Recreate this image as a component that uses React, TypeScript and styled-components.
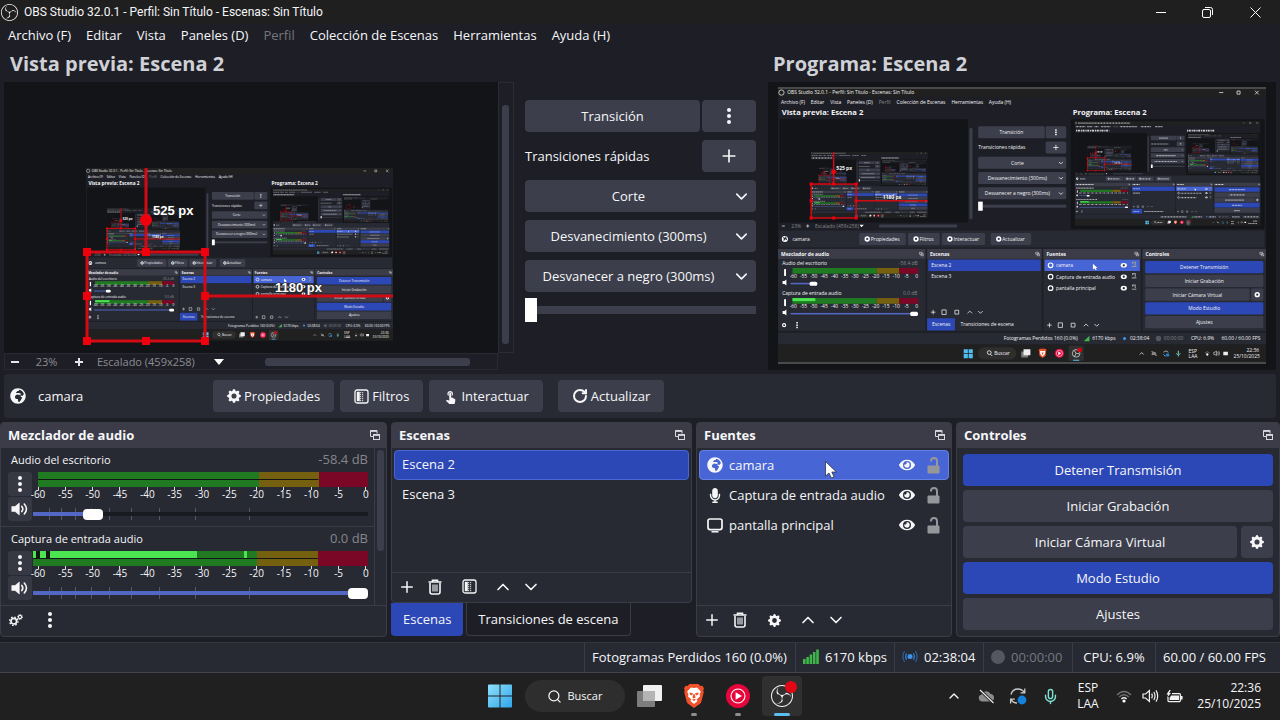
import React, { createContext, useContext } from 'react';
import styled, { createGlobalStyle, css } from 'styled-components';
import { BsGearFill } from 'react-icons/bs';
import { FaEye, FaGlobeAfrica, FaMicrophone } from 'react-icons/fa';
import { MdTouchApp } from 'react-icons/md';
import { SiObsstudio } from 'react-icons/si';
import { ChevronDown, ChevronUp, Mic, Plus, RotateCw, Search } from 'lucide-react';

const c = {
  window: '#1e1f26',
  panel: '#272a33',
  header: '#3b3c48',
  button: '#3c3e4b',
  border: '#3a3c48',
  canvas: '#131418',
  blue: '#2c48b6',
  blueEdge: '#4a66d4',
  source: '#4865d5',
  slider: '#5268c4',
  text: '#f6f6f8',
  muted: '#85868c',
  task: '#202020',
};

const Global = createGlobalStyle`
  *, *::before, *::after { box-sizing: border-box; }
  body {
    margin: 0;
    background: ${c.window};
    color: ${c.text};
    font: 13px/18px 'Open Sans', 'Noto Sans', sans-serif;
  }
  button, select, input { font: inherit; color: inherit; margin: 0; }
  ul { list-style: none; margin: 0; padding: 0; }
  svg { flex: none; display: block; }
`;

/* ---------- shared parts ---------- */

const Bare = styled.button`
  display: inline-flex;
  align-items: center;
  justify-content: center;
  padding: 0;
  border: 0;
  background: none;
`;

const IconButton = styled(Bare)<{ $w?: number }>`
  width: ${p => p.$w ?? 28}px;
  height: 28px;
`;

const Button = styled(Bare)<{ $primary?: boolean; $grow?: boolean; $w?: number }>`
  height: 32px;
  padding: 0 14px;
  gap: 3px;
  border-radius: 4px;
  white-space: nowrap;
  background: ${p => (p.$primary ? c.blue : c.button)};
  ${p => p.$grow && css`flex: 1;`}
  ${p => p.$w && css`width: ${p.$w}px; padding: 0;`}
`;

const Row = styled.div<{ $gap: number }>`
  display: flex;
  align-items: center;
  gap: ${p => p.$gap}px;
`;

/* ---------- icons ---------- */

const TrashIcon = () => (
  <svg width="14" height="16" viewBox="0 0 14 16" fill="none" stroke="currentColor">
    <path d="M0.5 3H13.5M4.5 2.5V1.2H9.5V2.5" strokeWidth="1.6" />
    <path d="M2 4V13Q2 15 4 15H10Q12 15 12 13V4" strokeWidth="1.6" />
    <path d="M5 5.5V12.5M7 5.5V12.5M9 5.5V12.5" strokeWidth="1.1" />
  </svg>
);

const FilterIcon = () => (
  <svg width="15" height="15" viewBox="0 0 15 15" fill="none">
    <rect x="1" y="1" width="13" height="13" rx="2" stroke="currentColor" strokeWidth="1.3" />
    <rect x="2.8" y="2.8" width="3" height="9.4" fill="currentColor" />
    <path d="M6.6 3V12.4M8.6 3V12.4" stroke="currentColor" strokeWidth="1.2" strokeDasharray="1.2 0.8" opacity="0.75" />
  </svg>
);

const KebabIcon = () => (
  <svg width="6" height="18" viewBox="0 0 6 18" fill="currentColor">
    <circle cx="3" cy="3" r="2" />
    <circle cx="3" cy="9" r="2" />
    <circle cx="3" cy="15" r="2" />
  </svg>
);

const SpeakerIcon = () => (
  <svg width="18" height="14" viewBox="0 0 18 14" fill="none" stroke="currentColor" strokeLinecap="round">
    <path d="M1 4.6H4L8.3 1V13L4 9.4H1Z" fill="currentColor" strokeWidth="0.6" />
    <path d="M10.8 4.4Q12.8 7 10.8 9.6" strokeWidth="1.6" />
    <path d="M13.3 2Q17.6 7 13.3 12" strokeWidth="1.6" />
  </svg>
);

const FloatIcon = () => (
  <svg width="10" height="10" viewBox="0 0 10 10" fill="none" stroke="#d8d9de">
    <path d="M3.5 6.5H0.5V0.5H7V3.5" />
    <path d="M0.5 1.2H7" strokeWidth="1.4" />
    <rect x="3.5" y="4.5" width="6" height="5" />
    <path d="M3.5 5.2H9.5" strokeWidth="1.4" />
  </svg>
);

const UnlockIcon = () => (
  <svg width="13" height="17" viewBox="0 0 13 17">
    <path d="M4 4.5V4A3 3 0 0 1 10 4V9" fill="none" stroke="#96979b" strokeWidth="2" />
    <rect x="0.5" y="8.5" width="12" height="8" rx="1" fill="#96979b" />
  </svg>
);

const MonitorIcon = () => (
  <svg width="16" height="15" viewBox="0 0 16 15" fill="none" stroke="currentColor" strokeWidth="1.7">
    <rect x="1" y="1" width="14" height="10.6" rx="2" />
    <path d="M4.5 13.8H11.5" strokeWidth="1.5" />
  </svg>
);

const GearsIcon = () => (
  <svg width="14" height="12" viewBox="0 0 14 12" fill="none" stroke="currentColor">
    <circle cx="4.8" cy="7.2" r="2.8" strokeWidth="1.7" />
    <circle cx="4.8" cy="7.2" r="4.2" strokeWidth="1.3" strokeDasharray="1.6 1.7" />
    <circle cx="11" cy="3" r="1.6" strokeWidth="1.1" />
    <circle cx="11" cy="3" r="2.5" strokeWidth="0.9" strokeDasharray="1 0.96" />
  </svg>
);

const SignalIcon = () => (
  <svg width="16" height="15" viewBox="0 0 16 15" fill="#3fb54a">
    <rect x="0" y="10" width="2.6" height="5" />
    <rect x="3.3" y="8" width="2.6" height="7" />
    <rect x="6.6" y="5.5" width="2.6" height="9.5" />
    <rect x="9.9" y="3" width="2.6" height="12" />
    <rect x="13.2" y="0.5" width="2.6" height="14.5" />
  </svg>
);

const LiveIcon = () => (
  <svg width="16" height="13" viewBox="0 0 16 13" fill="none" stroke="#3277c4" strokeWidth="1.2">
    <circle cx="8" cy="6.5" r="2.5" fill="#3f94ea" stroke="none" />
    <path d="M4.6 3.2Q2.6 6.5 4.6 9.8M11.4 3.2Q13.4 6.5 11.4 9.8" />
    <path d="M2.6 1Q-0.8 6.5 2.6 12M13.4 1Q16.8 6.5 13.4 12" opacity="0.7" />
  </svg>
);

const WindowsIcon = () => (
  <svg width="24" height="24" viewBox="0 0 25 24">
    <defs>
      <linearGradient id="win" x1="0" y1="0" x2="1" y2="1">
        <stop offset="0" stopColor="#8fe0fb" />
        <stop offset="1" stopColor="#2fa6ea" />
      </linearGradient>
    </defs>
    <path fill="url(#win)" d="M1 0H12V11.5H0V1Q0 0 1 0ZM13 0H24Q25 0 25 1V11.5H13ZM0 12.5H12V24H1Q0 24 0 23ZM13 12.5H25V23Q25 24 24 24H13Z" />
  </svg>
);

const TaskViewIcon = () => (
  <svg width="25" height="22" viewBox="0 0 25 22">
    <rect x="6" y="0" width="19" height="16" rx="1" fill="#f0f0f0" />
    <rect x="0" y="6" width="18" height="16" rx="1" fill="#7d7d7d" />
    <rect x="6" y="6" width="12" height="10" fill="#b4b4b4" />
  </svg>
);

const BraveIcon = () => (
  <svg width="20" height="24" viewBox="0 0 20 24">
    <path fill="#f0502a" d="M5.5 0H14.5L16.4 2L18.4 1.8L20 4.2L19.2 6.4L19.8 8L17.4 17.4Q17 19 15.6 20L10 24L4.4 20Q3 19 2.6 17.4L0.2 8L0.8 6.4L0 4.2L1.6 1.8L3.6 2Z" />
    <path fill="#fff" d="M10 4L13 3.6L16.8 7.6L15.6 10.6L16 12.4L12.6 15.4L13.6 17L10 20L6.4 17L7.4 15.4L4 12.4L4.4 10.6L3.2 7.6L7 3.6Z" />
    <path fill="#f0502a" d="M5.4 8.4L9 9.2L8 11.4L5.8 10.4ZM14.6 8.4L11 9.2L12 11.4L14.2 10.4ZM9.5 10H10.5L11.6 13.6L10 14.4L8.4 13.6ZM8 15.6L10 14.9L12 15.6L10 17Z" />
  </svg>
);

const MusicIcon = () => (
  <svg width="24" height="24" viewBox="0 0 24 24">
    <circle cx="12" cy="12" r="12" fill="#e6063c" />
    <circle cx="12" cy="12" r="7" fill="none" stroke="#fff" strokeWidth="1.1" />
    <path d="M9.6 8.2L16 12L9.6 15.8Z" fill="#fff" />
  </svg>
);

const CloudOffIcon = () => (
  <svg width="17" height="15" viewBox="0 0 17 15">
    <path d="M4 12.5A3.6 3.6 0 0 1 3.6 5.4A5 5 0 0 1 12.6 5A3.8 3.8 0 0 1 13 12.5Z" fill="#8d8d8d" />
    <path d="M2 1L15.5 14" stroke="#202020" strokeWidth="3" />
    <path d="M2 1L15.5 14" stroke="#eee" strokeWidth="1.1" />
  </svg>
);

const SyncIcon = () => (
  <svg width="18" height="18" viewBox="0 0 18 18" fill="none" stroke="#c9c9c9" strokeWidth="1.3">
    <path d="M2 7.5Q3.5 2 9 2Q13 2 15.5 5.6M15.8 1.6V5.8H11.6" />
    <path d="M8 16Q4 16 2 12.4M1.6 16.4V12.2H5.8" />
    <circle cx="13" cy="13" r="4.4" fill="#1583dc" stroke="none" />
  </svg>
);

const WifiIcon = () => (
  <svg width="16" height="13" viewBox="0 0 16 13" fill="none" strokeWidth="1.4">
    <path d="M1 5Q8 -2 15 5M3.2 7Q8 2.4 12.8 7" stroke="#707070" />
    <path d="M5.4 9Q8 6.6 10.6 9" stroke="#eee" />
    <circle cx="8" cy="11" r="1.6" fill="#fff" />
  </svg>
);

const SoundIcon = () => (
  <svg width="17" height="14" viewBox="0 0 17 14" fill="none" stroke="#f2f2f2" strokeWidth="1.2">
    <path d="M1 5H3.6L7.4 1.6V12.4L3.6 9H1Z" />
    <path d="M9.6 4.6Q11 7 9.6 9.4M11.8 3Q14.2 7 11.8 11M14 1.4Q17.4 7 14 12.6" />
  </svg>
);

const BatteryIcon = () => (
  <svg width="17" height="13" viewBox="0 0 17 13">
    <path d="M6 3.6H13.4Q14.4 3.6 14.4 4.6V10.6Q14.4 11.6 13.4 11.6H3Q2 11.6 2 10.6V7" fill="none" stroke="#f2f2f2" strokeWidth="1.2" />
    <path d="M5 5.4H13V10H3.6V8Z" fill="#f2f2f2" />
    <path d="M15 6H16.6V9.4H15Z" fill="#f2f2f2" />
    <path d="M3.4 0L0.4 4.6H2.2L1.2 7.6L5 3H3.2L4.8 0Z" fill="#f2f2f2" />
  </svg>
);

const Pointer = styled.svg`
  position: absolute;
  left: 125px;
  top: 10px;
  pointer-events: none;
`;

/* ---------- captured desktop shown inside the monitors ---------- */

const MENU: [string, boolean?][] = [
  ['Archivo (F)'], ['Editar'], ['Vista'], ['Paneles (D)'], ['Perfil', true],
  ['Colección de Escenas'], ['Herramientas'], ['Ayuda (H)'],
];
const MENU_X = [8, 86, 137, 181, 264, 311, 455, 553];
const DB = [-60, -55, -50, -45, -40, -35, -30, -25, -20, -15, -10, -5, 0];

/* Width in real pixels of the capture being drawn; small ones get strokes in place of words. */
const CaptureSize = createContext(1280);
const READABLE = 200;

type LabelProps = { x: number; y: number; bold?: boolean; big?: boolean; mid?: boolean; dim?: boolean; children: string | number };

const LabelText = styled.text<{ $bold?: boolean; $big?: boolean; $mid?: boolean; $dim?: boolean }>`
  fill: ${p => (p.$dim ? c.muted : '#f4f4f6')};
  font-size: ${p => (p.$big ? 20 : 13)}px;
  font-weight: ${p => (p.$bold ? 700 : 400)};
  text-anchor: ${p => (p.$mid ? 'middle' : 'start')};
`;

const Label = ({ x, y, bold, big, mid, dim, children }: LabelProps) => {
  const px = useContext(CaptureSize);
  if (px >= READABLE) {
    return <LabelText x={x} y={y} $bold={bold} $big={big} $mid={mid} $dim={dim}>{children}</LabelText>;
  }
  const size = big ? 20 : 13;
  const width = String(children).length * size * (bold ? 0.52 : 0.46);
  const height = size * 0.6;
  return (
    <path
      d={`M${mid ? x - width / 2 : x} ${y - height / 2}h${width}`}
      stroke={dim ? '#666' : '#e8e8ec'}
      strokeWidth={height}
      strokeDasharray={`${size * 0.4} ${size * 0.22} ${size * 0.7} ${size * 0.3}`}
      opacity={bold ? 0.9 : 0.7}
    />
  );
};

const CaptureMeter = ({ y, level, volume }: { y: number; level: number; volume: number }) => (
  <g>
    <rect x="38" y={y} width="221" height="15" fill="#207a22" />
    <rect x="259" y={y} width="59" height="15" fill="#74600f" />
    <rect x="318" y={y} width="50" height="15" fill="#7b0726" />
    <rect x="38" y={y} width={level} height="8" fill="#4be552" />
    {DB.map((d, i) => <Label key={d} mid x={40 + i * 27} y={y + 26}>{d}</Label>)}
    <rect x="16" y={y + 3} width="5" height="18" fill="#fff" />
    <path d={`M12 ${y + 34}H17L22 ${y + 30}V${y + 46}L17 ${y + 42}H12Z`} fill="#fff" />
    <rect x="33" y={y + 39} width={volume} height="4" fill={c.slider} />
    <rect x={33 + volume - 10} y={y + 36} width="20" height="11" rx="4" fill="#fff" />
  </g>
);

const Guides = ({ weight = 3 }: { weight?: number }) => (
  <g stroke="#d20a14" fill="#f0000c" strokeWidth={weight}>
    <rect x="83" y="170" width="118" height="89" fill="none" />
    <path d="M142 86V170M201 214H389" />
    <g stroke="none">
      {[[83, 170], [142, 170], [201, 170], [83, 214], [201, 214], [83, 259], [142, 259], [201, 259]].map(([x, y]) => (
        <rect key={`${x}-${y}`} x={x - 4} y={y - 4} width="8" height="8" />
      ))}
      <circle cx="142" cy="138" r="6" />
    </g>
  </g>
);

const GuideLabel = styled.text`
  fill: #fff;
  font: bold 13px 'Liberation Sans', sans-serif;
  paint-order: stroke;
  stroke: #222;
  stroke-width: 1px;
`;

const CaptureContents = ({ depth }: { depth: number }) => (
  <>
    <rect width="1280" height="720" fill={c.window} />
    <rect width="1280" height="24" fill={c.task} />
    <circle cx="9" cy="12" r="7" fill="none" stroke="#eee" strokeWidth="2" />
    <Label x={24} y={17}>OBS Studio 32.0.1 - Perfil: Sin Título - Escenas: Sin Título</Label>
    <path d="M1157 12H1168M1204 8H1212V16H1204ZM1251 7L1261 17M1261 7L1251 17" stroke="#eee" strokeWidth="2" fill="none" />
    {MENU.map(([t, dim], i) => <Label key={t} dim={dim} x={MENU_X[i]} y={41}>{t}</Label>)}
    <Label bold big x={10} y={71}>Vista previa: Escena 2</Label>
    <Label bold big x={773} y={71}>Programa: Escena 2</Label>
    <rect x="4" y="82" width="494" height="271" fill={c.canvas} />
    <rect x="768" y="82" width="508" height="288" fill={c.canvas} />
    {depth > 0 && <Capture x={86} y={168} width={307} depth={depth - 1} />}
    {depth > 0 && <Capture x={778} y={87} width={488} depth={depth - 1} />}
    <g transform="translate(4 82)"><Guides weight={4} /></g>
    <Label bold x={153} y={215}>525 px</Label>
    <Label bold x={275} y={292}>1180 px</Label>
    <rect x="502" y="105" width="8" height="239" rx="3" fill={c.button} />
    <rect x="265" y="358" width="205" height="8" rx="3" fill={c.button} />
    <path d="M10 362H18M74 362H82M78 358V366" stroke="#ddd" strokeWidth="2" />
    <Label dim x={35} y={367}>23%</Label>
    <Label dim x={97} y={367}>Escalado (459x258)</Label>
    <path d="M214 359H225L219 365Z" fill="#fff" />
    <rect x="525" y="100" width="175" height="32" rx="4" fill={c.button} />
    <Label mid x={612} y={121}>Transición</Label>
    <rect x="702" y="100" width="54" height="32" rx="4" fill={c.button} />
    <path d="M729 108V124" stroke="#fff" strokeWidth="4" strokeDasharray="4 2" />
    <Label x={525} y={161}>Transiciones rápidas</Label>
    <rect x="702" y="140" width="54" height="32" rx="4" fill={c.button} />
    <path d="M722 156H736M729 149V163" stroke="#fff" strokeWidth="2" />
    {['Corte', 'Desvanecimiento (300ms)', 'Desvanecer a negro (300ms)'].map((t, i) => (
      <g key={t}>
        <rect x="525" y={180 + i * 40} width="231" height="32" rx="4" fill={c.button} />
        <Label mid x={628} y={201 + i * 40}>{t}</Label>
        <path d={`M737 ${194 + i * 40}L742 ${199 + i * 40}L747 ${194 + i * 40}`} stroke="#fff" strokeWidth="2" fill="none" />
      </g>
    ))}
    <rect x="525" y="306" width="231" height="8" fill={c.button} />
    <rect x="525" y="298" width="12" height="24" fill="#fff" />
    <rect x="4" y="374" width="1272" height="44" fill={c.panel} />
    <circle cx="18" cy="396" r="8" fill="#fff" />
    <path d="M14 392L18 395L15 400M21 390L20 395L23 398" stroke={c.panel} strokeWidth="3" fill="none" />
    <Label x={38} y={401}>camara</Label>
    {([['Propiedades', 213, 122], ['Filtros', 341, 83], ['Interactuar', 430, 113], ['Actualizar', 558, 106]] as [string, number, number][]).map(([t, bx, w]) => (
      <g key={t}>
        <rect x={bx} y="380" width={w} height="32" rx="4" fill={c.button} />
        <circle cx={bx + 21} cy="396" r="5" fill="none" stroke="#fff" strokeWidth="4" />
        <Label x={bx + 30} y={401}>{t}</Label>
      </g>
    ))}
    {([['Mezclador de audio', 0, 387], ['Escenas', 391, 301], ['Fuentes', 696, 256], ['Controles', 956, 324]] as [string, number, number][]).map(([t, bx, w]) => (
      <g key={t}>
        <rect x={bx} y="422" width={w} height="215" fill={c.panel} />
        <rect x={bx} y="422" width={w} height="26" fill={c.header} />
        <Label bold x={bx + 8} y={440}>{t}</Label>
        <path d={`M${bx + w - 16} 431H${bx + w - 9}V436H${bx + w - 16}ZM${bx + w - 12} 435H${bx + w - 6}V440H${bx + w - 12}Z`} fill="none" stroke="#ddd" strokeWidth="1.5" />
      </g>
    ))}
    <Label x={11} y={465}>Audio del escritorio</Label>
    <Label dim x={317} y={465}>-58.4 dB</Label>
    <CaptureMeter y={472} level={0} volume={60} />
    <Label x={11} y={543}>Captura de entrada audio</Label>
    <Label dim x={328} y={543}>0.0 dB</Label>
    <CaptureMeter y={551} level={60} volume={324} />
    <circle cx="16" cy="622" r="4" fill="none" stroke="#fff" strokeWidth="3" />
    <path d="M50 614V630" stroke="#fff" strokeWidth="4" strokeDasharray="4 2" />
    <rect x="394" y="450" width="295" height="30" fill={c.blue} />
    <Label x={402} y={469}>Escena 2</Label>
    <Label x={402} y={499}>Escena 3</Label>
    <rect x="391" y="604" width="73" height="32" fill={c.blue} />
    <Label x={404} y={625}>Escenas</Label>
    <Label x={479} y={625}>Transiciones de escena</Label>
    <rect x="699" y="450" width="250" height="30" fill={c.source} />
    {['camara', 'Captura de entrada audio', 'pantalla principal'].map((t, i) => (
      <g key={t}>
        <circle cx="715" cy={465 + i * 30} r="6" fill="none" stroke="#fff" strokeWidth="3" />
        <Label x={729} y={470 + i * 30}>{t}</Label>
        <ellipse cx="907" cy={465 + i * 30} rx="8" ry="6" fill="#fff" />
        <circle cx="907" cy={465 + i * 30} r="3" fill={c.panel} />
        <path d={`M930 ${461 + i * 30}V${457 + i * 30}H937V${465 + i * 30}M928 ${468 + i * 30}H940`} stroke="#999" strokeWidth="3" fill="none" />
      </g>
    ))}
    <path d="M826 461V476L830 473L833 478L836 476L833 472H838Z" fill="#fff" />
    {[[391, 588], [696, 622]].map(([bx, by]) => (
      <path
        key={bx}
        d={`M${bx + 10} ${by}H${bx + 22}M${bx + 16} ${by - 6}V${by + 6}M${bx + 39} ${by - 6}H${bx + 50}V${by + 6}H${bx + 39}ZM${bx + 73} ${by - 5}H${bx + 83}V${by + 5}H${bx + 73}ZM${bx + 106} ${by + 3}L${bx + 112} ${by - 3}L${bx + 118} ${by + 3}M${bx + 134} ${by - 3}L${bx + 140} ${by + 3}L${bx + 146} ${by - 3}`}
        fill="none" stroke="#eee" strokeWidth="2"
      />
    ))}
    {['Detener Transmisión', 'Iniciar Grabación', 'Iniciar Cámara Virtual', 'Modo Estudio', 'Ajustes'].map((t, i) => (
      <g key={t}>
        <rect x="963" y={454 + i * 36} width={i === 2 ? 274 : 310} height="32" rx="4" fill={i % 3 === 0 ? c.blue : c.button} />
        <Label mid x={i === 2 ? 1100 : 1118} y={475 + i * 36}>{t}</Label>
      </g>
    ))}
    <rect x="1241" y="526" width="32" height="32" rx="4" fill={c.button} />
    <circle cx="1257" cy="542" r="5" fill="none" stroke="#fff" strokeWidth="4" />
    <rect y="642" width="1280" height="31" fill={c.panel} />
    <Label x={592} y={662}>Fotogramas Perdidos 160 (0.0%)</Label>
    <path d="M802 664L817 650V664Z" fill="#3fb54a" />
    <Label x={824} y={662}>6170 kbps</Label>
    <circle cx="909" cy="657" r="4" fill="#3f94ea" />
    <Label x={923} y={662}>02:38:04</Label>
    <circle cx="998" cy="657" r="7" fill="#555660" />
    <Label dim x={1012} y={662}>00:00:00</Label>
    <Label x={1083} y={662}>CPU: 6.9%</Label>
    <Label x={1163} y={662}>60.00 / 60.00 FPS</Label>
    <rect y="673" width="1280" height="47" fill={c.task} />
    <path d="M487 685H498V696H487ZM500 685H511V696H500ZM487 698H498V709H487ZM500 698H511V709H500Z" fill="#52bdf0" />
    <rect x="525" y="680" width="100" height="32" rx="16" fill="#2e2e2e" />
    <circle cx="554" cy="694" r="5" fill="none" stroke="#fff" strokeWidth="2" />
    <path d="M557 698L562 703" stroke="#fff" strokeWidth="2" />
    <Label x={567} y={701}>Buscar</Label>
    <path d="M638 691H656V707H638Z" fill="#7d7d7d" />
    <path d="M644 685H662V701H644Z" fill="#eee" />
    <path d="M684 686L688 684H700L704 686L702 702L694 708L686 702Z" fill="#f0502a" />
    <path d="M694 704L688 698L687 690H701L700 698Z" fill="#fff" />
    <path d="M694 700L691 694H697Z" fill="#f0502a" />
    <circle cx="738" cy="696" r="12" fill="#e6063c" />
    <path d="M735 691L743 696L735 701Z" fill="#fff" />
    <circle cx="738" cy="696" r="8" fill="none" stroke="#fff" strokeWidth="1.5" />
    <rect x="762" y="676" width="40" height="40" rx="4" fill="#303031" />
    <circle cx="782" cy="696" r="10" fill="none" stroke="#ddd" strokeWidth="2" />
    <path d="M782 696L777 689M782 696L790 697M782 696L778 704" stroke="#ddd" strokeWidth="2" />
    <circle cx="791" cy="687" r="6" fill="#e00010" />
    <path d="M774 714H790" stroke="#5cbdf0" strokeWidth="3" />
    <path d="M949 699L954 694L959 699M980 690L993 703" stroke="#eee" strokeWidth="2" fill="none" />
    <path d="M980 701Q978 695 984 692Q992 690 993 699Z" fill="#888" />
    <path d="M1011 693Q1018 686 1024 693M1011 699Q1014 703 1017 703" stroke="#ccc" strokeWidth="2" fill="none" />
    <circle cx="1022" cy="700" r="4.5" fill="#1583dc" />
    <path d="M1050 689V698M1045 696Q1050 704 1055 696M1050 700V704" stroke="#7fe0d4" strokeWidth="2.5" fill="none" />
    <path d="M1120 695Q1126 688 1132 695" stroke="#777" strokeWidth="2" fill="none" />
    <circle cx="1126" cy="699" r="3" fill="#fff" />
    <path d="M1143 693H1146L1150 690V702L1146 699H1143ZM1153 692Q1156 696 1153 700M1156 690Q1160 696 1156 702" stroke="#eee" strokeWidth="1.5" fill="none" />
    <path d="M1168 692H1180V701H1168Z" fill="#eee" />
    <Label x={1077} y={694}>ESP</Label>
    <Label x={1077} y={709}>LAA</Label>
    <Label x={1229} y={692}>22:36</Label>
    <Label x={1195} y={708}>25/10/2025</Label>
  </>
);

const Capture = ({ x, y, width, depth, top }: { x: number; y: number; width: number; depth: number; top?: boolean }) => {
  const parent = useContext(CaptureSize);
  return (
    <CaptureSize.Provider value={top ? width : (width * parent) / 1280}>
      <svg x={x} y={y} width={width} height={(width * 9) / 16} viewBox="0 0 1280 720">
        <CaptureContents depth={depth} />
      </svg>
    </CaptureSize.Provider>
  );
};

/* ---------- window frame ---------- */

const Shell = styled.div`
  display: flex;
  flex-direction: column;
  min-height: 100vh;
`;

const TitleBar = styled.header`
  display: flex;
  align-items: center;
  gap: 6px;
  height: 24px;
  padding-left: 1px;
  background: #1f1f20;
  font: 12px/18px Roboto, 'Open Sans', sans-serif;
  h1 { flex: 1; margin: 0; font: inherit; }
`;

const MenuBar = styled.nav`
  display: flex;
  gap: 15px;
  height: 24px;
  padding: 0 8px 2px;
`;

const MenuItem = styled(Bare)`
  &:disabled { color: #74757b; }
`;

/* ---------- studio area ---------- */

const Studio = styled.main`
  flex: 1;
  display: grid;
  grid-template-columns: minmax(0, 514fr) 254px minmax(0, 512fr);
  grid-template-rows: 34px minmax(288px, 1fr);
`;

const MonitorTitle = styled.h2<{ $program?: boolean }>`
  grid-column: ${p => (p.$program ? 3 : '1 / 3')};
  grid-row: 1;
  margin: 0;
  padding-left: ${p => (p.$program ? 5 : 10)}px;
  font-size: 20px;
  line-height: 32px;
  color: #d0d1d6;
`;

const Preview = styled.section`
  display: grid;
  grid-template: minmax(0, 1fr) 17px / minmax(0, 1fr) 16px;
  padding-left: 4px;
`;

const Canvas = styled.svg`
  width: 100%;
  height: 100%;
  background: ${c.canvas};
`;

const VScroll = styled.div`
  border: 1px solid #2a2b33;
  padding: 22px 4px 8px 3px;
  display: flex;
`;

const Thumb = styled.div<{ $w?: number; $h?: number }>`
  background: ${c.button};
  border-radius: 3px;
  width: ${p => (p.$w ? `${p.$w}px` : 'auto')};
  height: ${p => (p.$h ? `${p.$h}px` : 'auto')};
  flex: ${p => (p.$w || p.$h ? 'none' : 1)};
`;

const ZoomBar = styled.div`
  display: flex;
  align-items: center;
  border: 1px solid #292a31;
  font-size: 11px;
  line-height: 15px;
  color: #8c8d92;
`;

const ZoomButton = styled(Bare)`
  width: 19px;
  height: 15px;
  color: #e6e6ea;
`;

const ZoomValue = styled.output`
  width: 45px;
  text-align: center;
`;

const ScaleSelect = styled.select`
  appearance: none;
  width: 141px;
  height: 15px;
  padding: 0 0 0 9px;
  border: 0;
  background: none;
  margin-right: -15px;
`;

const Caret = styled.svg`
  pointer-events: none;
  margin-right: 41px;
`;

const Transitions = styled.section`
  display: flex;
  flex-direction: column;
  gap: 8px;
  padding: 18px 12px 0 11px;
`;

const Spread = styled.div`
  display: flex;
  align-items: center;
  justify-content: space-between;
`;

const QuickButton = styled(Button)`
  gap: 0;
  padding: 0 5px 0 0;
  span { flex: 1; text-align: center; }
`;

const TBar = styled.input`
  appearance: none;
  width: 100%;
  height: 24px;
  margin-top: -2px;
  background: linear-gradient(${c.button}, ${c.button}) center / 100% 8px no-repeat;
  &::-webkit-slider-thumb {
    appearance: none;
    width: 12px;
    height: 24px;
    background: #fff;
  }
`;

const Program = styled.section`
  padding-right: 4px;
  min-width: 0;
`;

const SourceBar = styled.section`
  display: flex;
  align-items: center;
  gap: 6px;
  height: 44px;
  margin: 4px;
  padding: 0 6px;
  border-radius: 4px;
  background: ${c.panel};
`;

const SourceName = styled.div`
  display: flex;
  align-items: center;
  gap: 12px;
  width: 197px;
`;

const LastButton = styled(Button)`
  margin-left: 9px;
`;

/* ---------- docks ---------- */

const Docks = styled.div`
  display: grid;
  grid-template-columns: 387fr 301fr 256fr 324fr;
  gap: 4px;
  height: 215px;
`;

const Column = styled.div`
  display: flex;
  flex-direction: column;
  min-width: 0;
`;

const Panel = styled.section`
  flex: 1;
  display: flex;
  flex-direction: column;
  min-width: 0;
  background: ${c.panel};
  border: 1px solid ${c.border};
  border-radius: 4px;
`;

const PanelHead = styled.header`
  display: flex;
  align-items: center;
  justify-content: space-between;
  height: 25px;
  padding: 0 6px 2px 7px;
  background: ${c.header};
  h3 { margin: 0; font-size: 13px; line-height: 18px; }
`;

const PanelFoot = styled.footer<{ $h: number }>`
  display: flex;
  align-items: center;
  height: ${p => p.$h}px;
  padding: 0 0 2px 1px;
  border-top: 1px solid ${c.border};
`;

const Gap = styled.span`
  width: 6px;
`;

const MixerBody = styled.div`
  flex: 1;
  display: flex;
`;

const Strips = styled.div`
  flex: 1;
  min-width: 0;
  border-right: 1px solid ${c.border};
`;

const MixerScroll = styled.div`
  width: 11px;
  padding: 2px;
`;

const Strip = styled.div`
  display: grid;
  grid-template-columns: 24px minmax(0, 1fr);
  column-gap: 1px;
  grid-template-rows: 24px 25px 28px;
  padding: 0 6px 0 7px;
  height: 78px;
  & + & { border-top: 1px solid ${c.border}; }
`;

const StripHead = styled.div`
  grid-column: 1 / 3;
  display: flex;
  justify-content: space-between;
  padding-left: 3px;
  line-height: 23px;
  label { font-size: 11px; }
  output { color: ${c.muted}; }
`;

const StripButton = styled(Bare)`
  height: 24px;
  border-radius: 3px;
  background: #363843;
`;

const Meter = styled.div`
  display: flex;
  flex-direction: column;
`;

const Bars = styled.div<{ $idle?: boolean }>`
  position: relative;
  height: 15px;
  flex: none;
  margin-left: ${p => (p.$idle ? 5 : 0)}px;
  background:
    linear-gradient(#141518, #141518) 0 7px / 85% 1px no-repeat,
    linear-gradient(90deg, #207a22 67%, #74600f 67%, #74600f 85%, #7b0726 85%);
`;

const Level = styled.span<{ $from: number; $to: number; $dark?: boolean }>`
  position: absolute;
  top: 0;
  left: ${p => p.$from}%;
  width: ${p => p.$to - p.$from}%;
  height: ${p => (p.$dark ? 8 : 7)}px;
  background: ${p => (p.$dark ? '#14160f' : '#4be552')};
`;

const Scale = styled.div`
  display: flex;
  justify-content: space-between;
  padding: 0 2px 0 5px;
  font-size: 10px;
  line-height: 10px;
  span {
    width: 0;
    display: flex;
    flex-direction: column;
    align-items: center;
    &::before { content: ''; width: 1px; height: 3px; margin-bottom: -1px; flex: none; background: #ddd; }
  }
`;

const Fader = styled.div`
  position: relative;
  display: flex;
  height: 24px;
  padding-top: 5px;
`;

const Tick = styled.i<{ $at: number }>`
  position: absolute;
  left: ${p => p.$at}%;
  top: 11px;
  width: 1px;
  height: 12px;
  background: #555763;
`;

const Volume = styled.input<{ $fill: number }>`
  appearance: none;
  position: relative;
  width: 100%;
  flex: none;
  height: 24px;
  background: linear-gradient(90deg, ${c.slider} ${p => p.$fill}%, #1a1b20 ${p => p.$fill}%) center / 100% 4px no-repeat;
  &::-webkit-slider-thumb {
    appearance: none;
    width: 20px;
    height: 11px;
    border-radius: 4px;
    background: #fff;
  }
`;

const List = styled.ul`
  flex: 1;
  padding: 2px;
`;

const SceneButton = styled(Bare)<{ $on?: boolean }>`
  width: 100%;
  height: 30px;
  justify-content: flex-start;
  padding: 0 7px 2px;
  border-radius: 4px;
  border: 1px solid ${p => (p.$on ? c.blueEdge : 'transparent')};
  background: ${p => (p.$on ? c.blue : 'none')};
`;

const SourceItem = styled.li<{ $on?: boolean }>`
  position: relative;
  display: flex;
  align-items: center;
  height: 30px;
  padding: 0 5px 0 7px;
  gap: 6px;
  border-radius: 4px;
  border: 1px solid ${p => (p.$on ? '#6480e6' : 'transparent')};
  background: ${p => (p.$on ? c.source : 'none')};
  > span { flex: 1; white-space: nowrap; }
  > svg { width: 16px; }
  > ${Pointer} { width: 12px; }
`;

const Toggle = styled(Bare)`
  width: 20px;
  height: 20px;
`;

const Tabs = styled.div`
  display: flex;
  gap: 3px;
  height: 34px;
`;

const Tab = styled(Bare)<{ $on?: boolean }>`
  height: 33px;
  padding: 0 11px;
  border-radius: 0 0 4px 4px;
  border: 1px solid ${p => (p.$on ? c.blue : c.border)};
  border-top: 0;
  background: ${p => (p.$on ? c.blue : 'none')};
`;

const Controls = styled.div`
  display: flex;
  flex-direction: column;
  gap: 4px;
  padding: 6px;
`;

/* ---------- status bar and taskbar ---------- */

const Status = styled.footer`
  display: flex;
  justify-content: flex-end;
  height: 31px;
  margin-top: 5px;
  background: ${c.panel};
  border-top: 1px solid #343640;
  border-bottom: 1px solid #43444c;
`;

const Cell = styled.div<{ $w: number; $dim?: boolean; $center?: boolean }>`
  display: flex;
  align-items: center;
  justify-content: ${p => (p.$center ? 'center' : 'flex-start')};
  gap: 6px;
  width: ${p => p.$w}px;
  padding: 0 0 2px ${p => (p.$center ? 0 : 7)}px;
  border-left: 1px solid ${c.border};
  white-space: nowrap;
  color: ${p => (p.$dim ? '#777882' : c.text)};
`;

const RecordDot = styled.span`
  width: 14px;
  height: 14px;
  border-radius: 50%;
  background: #555660;
`;

const Taskbar = styled.footer`
  display: grid;
  grid-template-columns: 1fr auto 1fr;
  align-items: center;
  height: 47px;
  padding-bottom: 1px;
  background: ${c.task};
`;

const Apps = styled.div`
  grid-column: 2;
  display: flex;
  align-items: center;
  gap: 4px;
  padding-left: 1px;
`;

const SearchButton = styled(Bare)`
  width: 100px;
  height: 32px;
  margin: 0 1px;
  gap: 6px;
  border-radius: 16px;
  background: #2e2e2e;
  font-size: 11px;
`;

const AppButton = styled(Bare)<{ $active?: boolean; $running?: boolean }>`
  position: relative;
  width: 40px;
  height: 40px;
  border-radius: 4px;
  background: ${p => (p.$active ? '#303031' : 'none')};
  &::after {
    content: '';
    display: ${p => (p.$active || p.$running ? 'block' : 'none')};
    position: absolute;
    bottom: 0;
    width: ${p => (p.$active ? 16 : 6)}px;
    height: 3px;
    border-radius: 2px;
    background: ${p => (p.$active ? '#5cbdf0' : '#8e8e8e')};
  }
`;

const Badge = styled.span`
  position: absolute;
  top: 5px;
  right: 5px;
  width: 12px;
  height: 12px;
  border-radius: 50%;
  background: #e30613;
`;

const Tray = styled.div`
  display: flex;
  align-items: center;
  justify-content: flex-end;
  padding-right: 19px;
  font-size: 12px;
  line-height: 16px;
`;

const TrayButton = styled(Bare)<{ $w: number }>`
  width: ${p => p.$w}px;
  height: 40px;
`;

const Clock = styled.time`
  width: 75px;
  text-align: right;
`;

/* ---------- composition ---------- */

const PanelTitle = ({ children }: { children: string }) => (
  <PanelHead>
    <h3>{children}</h3>
    <Bare aria-label={`Desacoplar ${children}`}><FloatIcon /></Bare>
  </PanelHead>
);

const TICKS = [4.8, 8.4, 12.6, 17.4, 22.8, 29.4, 37.7, 48.5, 64.6];

const Channel = ({ id, name, db, value, idle, children }: {
  id: string; name: string; db: string; value: number; idle?: boolean; children?: React.ReactNode;
}) => (
  <Strip>
    <StripHead>
      <label htmlFor={id}>{name}</label>
      <output htmlFor={id}>{db}</output>
    </StripHead>
    <StripButton aria-label="Opciones de audio"><KebabIcon /></StripButton>
    <Meter>
      <Bars $idle={idle}>{children}</Bars>
      <Scale>{DB.map(d => <span key={d}>{d}</span>)}</Scale>
    </Meter>
    <StripButton aria-label="Silenciar"><SpeakerIcon /></StripButton>
    <Fader>
      {TICKS.map(t => <Tick key={t} $at={t} />)}
      <Volume id={id} type="range" min={0} max={100} defaultValue={value} $fill={value} />
    </Fader>
  </Strip>
);

const ListTools = ({ height, middle, middleLabel }: { height: number; middle: React.ReactNode; middleLabel: string }) => (
  <PanelFoot $h={height}>
    <IconButton aria-label="Añadir"><Plus size={18} /></IconButton>
    <IconButton aria-label="Eliminar"><TrashIcon /></IconButton>
    <Gap />
    <IconButton aria-label={middleLabel}>{middle}</IconButton>
    <Gap />
    <IconButton aria-label="Subir"><ChevronUp size={20} /></IconButton>
    <IconButton aria-label="Bajar"><ChevronDown size={20} /></IconButton>
  </PanelFoot>
);

const SOURCES = [
  { name: 'camara', icon: <FaGlobeAfrica size={16} />, on: true },
  { name: 'Captura de entrada audio', icon: <FaMicrophone size={15} /> },
  { name: 'pantalla principal', icon: <MonitorIcon /> },
];

export default function App() {
  return (
    <Shell>
      <Global />
      <TitleBar>
        <SiObsstudio size={17} />
        <h1>OBS Studio 32.0.1 - Perfil: Sin Título - Escenas: Sin Título</h1>
        <IconButton $w={46} aria-label="Minimizar">
          <svg width="10" height="10" stroke="#fff"><path d="M0 5.5H10" /></svg>
        </IconButton>
        <IconButton $w={34} aria-label="Restaurar">
          <svg width="11" height="11" fill="none" stroke="#fff">
            <rect x="0.5" y="2.5" width="8" height="8" rx="1.5" />
            <path d="M3 0.5H8.5Q10.5 0.5 10.5 2.5V8" />
          </svg>
        </IconButton>
        <IconButton $w={50} aria-label="Cerrar">
          <svg width="11" height="11" stroke="#fff"><path d="M0.5 0.5L10.5 10.5M10.5 0.5L0.5 10.5" /></svg>
        </IconButton>
      </TitleBar>
      <MenuBar>
        {MENU.map(([t, off]) => <MenuItem key={t} disabled={off}>{t}</MenuItem>)}
      </MenuBar>

      <Studio>
        <MonitorTitle>Vista previa: Escena 2</MonitorTitle>
        <MonitorTitle $program>Programa: Escena 2</MonitorTitle>
        <Preview>
          <Canvas viewBox="0 0 494 271" role="img" aria-label="Vista previa">
            <Capture top x={82} y={86} width={307} depth={2} />
            <Guides />
            <GuideLabel x="149" y="133">525 px</GuideLabel>
            <GuideLabel x="271" y="210">1180 px</GuideLabel>
          </Canvas>
          <VScroll><Thumb /></VScroll>
          <ZoomBar>
            <ZoomButton aria-label="Reducir">
              <svg width="8" height="8" stroke="currentColor" strokeWidth="2"><path d="M0 4H8" /></svg>
            </ZoomButton>
            <ZoomValue>23%</ZoomValue>
            <ZoomButton aria-label="Ampliar">
              <svg width="8" height="8" stroke="currentColor" strokeWidth="2"><path d="M0 4H8M4 0V8" /></svg>
            </ZoomButton>
            <ScaleSelect aria-label="Escala de la vista previa">
              <option>Escalado (459x258)</option>
            </ScaleSelect>
            <Caret width="10" height="6"><path d="M0 0H10L5 6Z" fill="#fff" /></Caret>
            <Thumb $w={205} $h={8} />
          </ZoomBar>
        </Preview>

        <Transitions>
          <Row $gap={2}>
            <Button $grow>Transición</Button>
            <Button $w={54} aria-label="Opciones de transición"><KebabIcon /></Button>
          </Row>
          <Spread>
            <span>Transiciones rápidas</span>
            <Button $w={54} aria-label="Añadir transición rápida"><Plus size={20} /></Button>
          </Spread>
          {['Corte', 'Desvanecimiento (300ms)', 'Desvanecer a negro (300ms)'].map(t => (
            <QuickButton key={t}><span>{t}</span><ChevronDown size={19} /></QuickButton>
          ))}
          <TBar type="range" aria-label="Barra de transición" min={0} max={100} defaultValue={0} />
        </Transitions>

        <Program>
          <Canvas viewBox="0 0 508 288" role="img" aria-label="Programa">
            <Capture top x={10} y={6} width={488} depth={3} />
            <path d="M10 6H498M10 281H498" stroke="#4a4a4d" strokeWidth="2" />
          </Canvas>
        </Program>
      </Studio>

      <SourceBar>
        <SourceName><FaGlobeAfrica size={16} />camara</SourceName>
        <Button><BsGearFill size={14} />Propiedades</Button>
        <Button><FilterIcon />Filtros</Button>
        <Button><MdTouchApp size={15} />Interactuar</Button>
        <LastButton><RotateCw size={16} strokeWidth={3} />Actualizar</LastButton>
      </SourceBar>

      <Docks>
        <Panel>
          <PanelTitle>Mezclador de audio</PanelTitle>
          <MixerBody>
            <Strips>
              <Channel id="desk" name="Audio del escritorio" db="-58.4 dB" value={16} idle />
              <Channel id="input" name="Captura de entrada audio" db="0.0 dB" value={100}>
                <Level $from={0} $to={49} />
                <Level $from={1} $to={2} $dark />
                <Level $from={4} $to={5} $dark />
                <Level $from={63} $to={64} />
              </Channel>
            </Strips>
            <MixerScroll><Thumb $h={101} /></MixerScroll>
          </MixerBody>
          <PanelFoot $h={31}>
            <IconButton aria-label="Propiedades avanzadas de audio"><GearsIcon /></IconButton>
            <Gap />
            <IconButton aria-label="Menú del mezclador"><KebabIcon /></IconButton>
          </PanelFoot>
        </Panel>

        <Column>
          <Panel>
            <PanelTitle>Escenas</PanelTitle>
            <List>
              <li><SceneButton $on>Escena 2</SceneButton></li>
              <li><SceneButton>Escena 3</SceneButton></li>
            </List>
            <ListTools height={30} middleLabel="Filtros de escena" middle={<FilterIcon />} />
          </Panel>
          <Tabs role="tablist">
            <Tab $on role="tab" aria-selected="true">Escenas</Tab>
            <Tab role="tab" aria-selected="false">Transiciones de escena</Tab>
          </Tabs>
        </Column>

        <Panel>
          <PanelTitle>Fuentes</PanelTitle>
          <List>
            {SOURCES.map(s => (
              <SourceItem key={s.name} $on={s.on}>
                {s.icon}
                <span>{s.name}</span>
                <Toggle aria-label={`Mostrar ${s.name}`}><FaEye size={16} /></Toggle>
                <Toggle aria-label={`Bloquear ${s.name}`}><UnlockIcon /></Toggle>
                {s.on && (
                  <Pointer width="12" height="18" viewBox="0 0 12 18">
                    <path d="M0.5 0.5V15L4 12L6.4 17L9 15.8L6.8 11H11.4Z" fill="#fff" stroke="#222" strokeWidth="0.7" />
                  </Pointer>
                )}
              </SourceItem>
            ))}
          </List>
          <ListTools height={31} middleLabel="Propiedades de fuente" middle={<BsGearFill size={13} />} />
        </Panel>

        <Panel>
          <PanelTitle>Controles</PanelTitle>
          <Controls>
            <Button $primary>Detener Transmisión</Button>
            <Button>Iniciar Grabación</Button>
            <Row $gap={4}>
              <Button $grow>Iniciar Cámara Virtual</Button>
              <Button $w={32} aria-label="Configurar cámara virtual"><BsGearFill size={14} /></Button>
            </Row>
            <Button $primary>Modo Estudio</Button>
            <Button>Ajustes</Button>
          </Controls>
        </Panel>
      </Docks>

      <Status>
        <Cell $w={211}>Fotogramas Perdidos 160 (0.0%)</Cell>
        <Cell $w={99}><SignalIcon />6170 kbps</Cell>
        <Cell $w={89}><LiveIcon />02:38:04</Cell>
        <Cell $w={89} $dim><RecordDot />00:00:00</Cell>
        <Cell $w={83} $center>CPU: 6.9%</Cell>
        <Cell $w={125}>60.00 / 60.00 FPS</Cell>
      </Status>

      <Taskbar>
        <Apps>
          <AppButton aria-label="Inicio"><WindowsIcon /></AppButton>
          <SearchButton><Search size={15} />Buscar</SearchButton>
          <AppButton aria-label="Vista de tareas"><TaskViewIcon /></AppButton>
          <AppButton $running aria-label="Brave"><BraveIcon /></AppButton>
          <AppButton $running aria-label="YouTube Music"><MusicIcon /></AppButton>
          <AppButton $active aria-label="OBS Studio"><SiObsstudio size={22} /><Badge /></AppButton>
        </Apps>
        <Tray>
          <TrayButton $w={32} aria-label="Iconos ocultos"><ChevronUp size={16} /></TrayButton>
          <TrayButton $w={32} aria-label="OneDrive"><CloudOffIcon /></TrayButton>
          <TrayButton $w={32} aria-label="Windows Update"><SyncIcon /></TrayButton>
          <TrayButton $w={32} aria-label="Micrófono"><Mic size={17} color="#7fe0d4" /></TrayButton>
          <TrayButton $w={44}>ESP<br />LAA</TrayButton>
          <TrayButton $w={28} aria-label="Wi-Fi"><WifiIcon /></TrayButton>
          <TrayButton $w={24} aria-label="Volumen"><SoundIcon /></TrayButton>
          <TrayButton $w={24} aria-label="Batería"><BatteryIcon /></TrayButton>
          <Clock>22:36<br />25/10/2025</Clock>
        </Tray>
      </Taskbar>
    </Shell>
  );
}
